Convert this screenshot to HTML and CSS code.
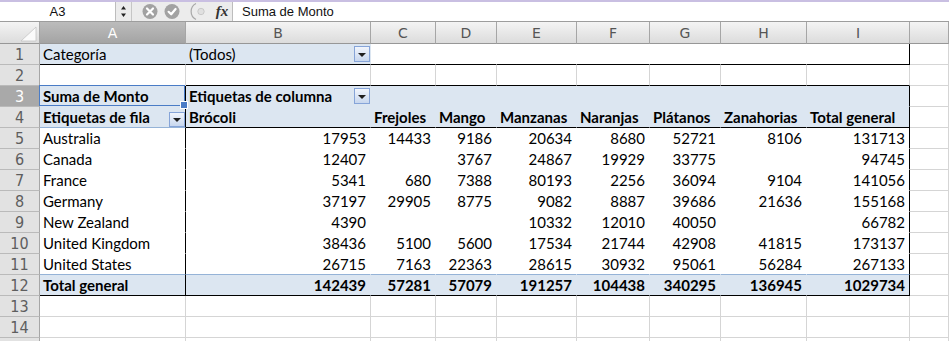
FILE: index.html
```html
<!DOCTYPE html>
<html lang="es">
<head>
<meta charset="utf-8">
<title>Tabla dinámica</title>
<link rel="stylesheet" href="styles.css">
</head>
<body>
<div class="formula-bar">
  <div class="name-box">A3</div>
  <div class="stepper">
    <svg width="7" height="13" viewBox="0 0 7 13"><path d="M3.5 1 L6 4.5 L1 4.5 Z" fill="#222"/><path d="M3.5 12 L6 8.5 L1 8.5 Z" fill="#222"/></svg>
  </div>
  <div class="tools">
    <svg class="tool-icons" width="80" height="19" viewBox="0 0 80 19">
      <circle cx="18" cy="9.5" r="7.5" fill="#a2a2a2"/>
      <path d="M15 6.5 L21 12.5 M21 6.5 L15 12.5" stroke="#fff" stroke-width="2.2" stroke-linecap="round"/>
      <circle cx="40" cy="9.5" r="7.5" fill="#a2a2a2"/>
      <path d="M36.6 9.8 L39.2 12.3 L43.6 7" stroke="#fff" stroke-width="2.2" fill="none" stroke-linecap="round" stroke-linejoin="round"/>
      <path d="M64 1.5 A 9 9 0 0 0 64 17.5" stroke="#a8a8a8" stroke-width="1.2" fill="none"/>
      <circle cx="69" cy="9.5" r="3.2" fill="#e0e0e0" stroke="#c2c2c2" stroke-width="0.8"/>
    </svg>
    <span class="fx">fx</span>
  </div>
  <div class="fb-input">Suma de Monto</div>
</div>

<div class="sheet">
  <div class="ch corner"><svg width="39" height="21" viewBox="0 0 39 21"><path d="M36 5 L36 19 L21 19 Z" fill="#fbfbfb" stroke="#c4c4c4" stroke-width="0.8"/></svg></div>
  <div class="ch sel">A</div>
  <div class="ch">B</div>
  <div class="ch">C</div>
  <div class="ch">D</div>
  <div class="ch">E</div>
  <div class="ch">F</div>
  <div class="ch">G</div>
  <div class="ch">H</div>
  <div class="ch">I</div>
  <div class="ch"></div>

  <!-- row 1 -->
  <div class="rh">1</div>
  <div class="c pf r1">Categoría</div>
  <div class="c pf r1 has-dd">(Todos)<span class="dd"></span></div>
  <div class="c r1"></div><div class="c r1"></div><div class="c r1"></div><div class="c r1"></div><div class="c r1"></div><div class="c r1"></div>
  <div class="c r1 edge"></div>
  <div class="c"></div>

  <!-- row 2 -->
  <div class="rh">2</div>
  <div class="c"></div>
  <div class="c top"></div><div class="c top"></div><div class="c top"></div><div class="c top"></div><div class="c top"></div><div class="c top"></div><div class="c top"></div><div class="c top"></div>
  <div class="c"></div>

  <!-- row 3 -->
  <div class="rh sel">3</div>
  <div class="c hd pl sel">Suma de Monto</div>
  <div class="c hd has-dd">Etiquetas de columna<span class="dd"></span></div>
  <div class="c hd"></div><div class="c hd"></div><div class="c hd"></div><div class="c hd"></div><div class="c hd"></div><div class="c hd"></div>
  <div class="c hd edge"></div>
  <div class="c"></div>

  <!-- row 4 -->
  <div class="rh">4</div>
  <div class="c hd pl lb has-dd">Etiquetas de fila<span class="dd dd-low"></span></div>
  <div class="c hd bk">Brócoli</div>
  <div class="c hd bk">Frejoles</div>
  <div class="c hd bk">Mango</div>
  <div class="c hd bk">Manzanas</div>
  <div class="c hd bk">Naranjas</div>
  <div class="c hd bk">Plátanos</div>
  <div class="c hd bk">Zanahorias</div>
  <div class="c hd bk edge">Total general</div>
  <div class="c"></div>

  <!-- row 5 -->
  <div class="rh">5</div>
  <div class="c body pl">Australia</div>
  <div class="c body num">17953</div><div class="c body num">14433</div><div class="c body num">9186</div><div class="c body num">20634</div><div class="c body num">8680</div><div class="c body num">52721</div><div class="c body num">8106</div>
  <div class="c body num edge">131713</div>
  <div class="c"></div>

  <!-- row 6 -->
  <div class="rh">6</div>
  <div class="c body pl">Canada</div>
  <div class="c body num">12407</div><div class="c body num"></div><div class="c body num">3767</div><div class="c body num">24867</div><div class="c body num">19929</div><div class="c body num">33775</div><div class="c body num"></div>
  <div class="c body num edge">94745</div>
  <div class="c"></div>

  <!-- row 7 -->
  <div class="rh">7</div>
  <div class="c body pl">France</div>
  <div class="c body num">5341</div><div class="c body num">680</div><div class="c body num">7388</div><div class="c body num">80193</div><div class="c body num">2256</div><div class="c body num">36094</div><div class="c body num">9104</div>
  <div class="c body num edge">141056</div>
  <div class="c"></div>

  <!-- row 8 -->
  <div class="rh">8</div>
  <div class="c body pl">Germany</div>
  <div class="c body num">37197</div><div class="c body num">29905</div><div class="c body num">8775</div><div class="c body num">9082</div><div class="c body num">8887</div><div class="c body num">39686</div><div class="c body num">21636</div>
  <div class="c body num edge">155168</div>
  <div class="c"></div>

  <!-- row 9 -->
  <div class="rh">9</div>
  <div class="c body pl">New Zealand</div>
  <div class="c body num">4390</div><div class="c body num"></div><div class="c body num"></div><div class="c body num">10332</div><div class="c body num">12010</div><div class="c body num">40050</div><div class="c body num"></div>
  <div class="c body num edge">66782</div>
  <div class="c"></div>

  <!-- row 10 -->
  <div class="rh">10</div>
  <div class="c body pl">United Kingdom</div>
  <div class="c body num">38436</div><div class="c body num">5100</div><div class="c body num">5600</div><div class="c body num">17534</div><div class="c body num">21744</div><div class="c body num">42908</div><div class="c body num">41815</div>
  <div class="c body num edge">173137</div>
  <div class="c"></div>

  <!-- row 11 -->
  <div class="rh">11</div>
  <div class="c body lb pl">United States</div>
  <div class="c body lb num">26715</div><div class="c body lb num">7163</div><div class="c body lb num">22363</div><div class="c body lb num">28615</div><div class="c body lb num">30932</div><div class="c body lb num">95061</div><div class="c body lb num">56284</div>
  <div class="c body lb num edge">267133</div>
  <div class="c"></div>

  <!-- row 12 -->
  <div class="rh">12</div>
  <div class="c hd bk pl">Total general</div>
  <div class="c hd bk num">142439</div><div class="c hd bk num">57281</div><div class="c hd bk num">57079</div><div class="c hd bk num">191257</div><div class="c hd bk num">104438</div><div class="c hd bk num">340295</div><div class="c hd bk num">136945</div>
  <div class="c hd bk num edge">1029734</div>
  <div class="c"></div>

  <!-- row 13 -->
  <div class="rh">13</div>
  <div class="c"></div><div class="c"></div><div class="c"></div><div class="c"></div><div class="c"></div><div class="c"></div><div class="c"></div><div class="c"></div><div class="c"></div><div class="c"></div>

  <!-- row 14 -->
  <div class="rh">14</div>
  <div class="c"></div><div class="c"></div><div class="c"></div><div class="c"></div><div class="c"></div><div class="c"></div><div class="c"></div><div class="c"></div><div class="c"></div><div class="c"></div>

  <!-- row 15 (only its top edge is visible) -->
  <div class="rh"></div>
  <div class="c"></div><div class="c"></div><div class="c"></div><div class="c"></div><div class="c"></div><div class="c"></div><div class="c"></div><div class="c"></div><div class="c"></div><div class="c"></div>
</div>
</body>
</html>
```

FILE: styles.css
```css
* { box-sizing: border-box; }

html, body {
  margin: 0;
  padding: 0;
  background: #fff;
  overflow: hidden;
}

body {
  font-family: Lato, Carlito, "Liberation Sans", sans-serif;
}

/* ---------- formula bar ---------- */
.formula-bar {
  display: flex;
  height: 22px;
  border-top: 2px solid #c9bfe2;
  border-bottom: 1px solid #9d9d9d;
  background: #ececec;
  font-family: "Liberation Sans", Arial, sans-serif;
  font-size: 13px;
  color: #111;
}

.name-box {
  width: 116px;
  background: #fff;
  border-right: 1px solid #bdbdbd;
  text-align: center;
  line-height: 19px;
}

.stepper {
  width: 16px;
  display: flex;
  align-items: center;
  justify-content: center;
  border-right: 1px solid #c6c6c6;
}

.tools {
  width: 100px;
  display: flex;
  align-items: center;
}

.tool-icons { display: block; }

.fx {
  width: 20px;
  text-align: center;
  font-family: "Liberation Serif", "Times New Roman", serif;
  font-style: italic;
  font-weight: bold;
  font-size: 15px;
  line-height: 19px;
  color: #333;
}

.fb-input {
  flex: 1;
  background: #fff;
  border-left: 1px solid #bdbdbd;
  padding-left: 9px;
  line-height: 19px;
}

/* ---------- sheet grid ---------- */
.sheet {
  display: grid;
  grid-template-columns: 40px 146px 185px 65px 61px 80px 73px 71px 86px 103px 1fr;
  grid-template-rows: 22px;
  grid-auto-rows: 21px;
}

.ch {
  display: flex;
  align-items: center;
  justify-content: center;
  background: linear-gradient(#f4f4f4, #dcdcdc);
  border-right: 1px solid #a6a6a6;
  border-bottom: 1px solid #979797;
  font-family: "DejaVu Sans", sans-serif;
  font-size: 14px;
  color: #555;
}

.ch.sel {
  background: linear-gradient(#bcbcbc, #a4a4a4);
  color: #fff;
}

.corner { justify-content: flex-start; }
.corner svg { display: block; }

.rh {
  display: flex;
  align-items: center;
  justify-content: center;
  background: #e2e2e2;
  border-right: 1px solid #a6a6a6;
  border-bottom: 1px solid #bababa;
  font-family: "DejaVu Sans Condensed", "DejaVu Sans", sans-serif;
  font-stretch: condensed;
  font-size: 16px;
  color: #5e5e5e;
}

.rh.sel {
  background: #a9a9a9;
  color: #fff;
}

.c {
  display: flex;
  align-items: center;
  padding: 0 4px 0 3px;
  white-space: nowrap;
  border-right: 1px solid #d5d5d5;
  border-bottom: 1px solid #d5d5d5;
  font-size: 15px;
  color: #000;
}

.num { justify-content: flex-end; }

/* pivot regions */
.pf {
  background: #dce6f1;
}

.hd {
  background: #dce6f1;
  font-weight: bold;
  border-right-color: transparent;
  border-bottom-color: transparent;
}

.body {
  border-right-color: transparent;
  border-bottom-color: transparent;
}

.r1 {
  border-right-color: transparent;
  border-bottom-color: #000;
}

.top { border-bottom-color: #000; }
.bk  { border-bottom-color: #000; }
.lb  { border-bottom-color: #95b3d7; }
.pl  { border-right-color: #000; }
.edge { border-right-color: #000; }

/* dropdown buttons */
.has-dd { padding-right: 0; }

.dd {
  width: 16px;
  height: 16px;
  margin-left: auto;
  flex: none;
  border: 1px solid #86a4d8;
  background: linear-gradient(#f1f5fc, #c8d7ee);
  display: flex;
  align-items: center;
  justify-content: center;
}

.dd::after {
  content: "";
  border-left: 4px solid transparent;
  border-right: 4px solid transparent;
  border-top: 4px solid #1e1e1e;
  margin-top: 1px;
}

.dd-low { align-self: flex-end; height: 15px; }

/* active cell selection */
.sel.c { position: relative; }

.sel.c::after {
  content: "";
  position: absolute;
  top: -1px;
  left: -1px;
  right: 0;
  bottom: 0;
  border: 1px solid #4a7cc6;
  pointer-events: none;
}

.sel.c::before {
  content: "";
  position: absolute;
  right: -3px;
  bottom: -3px;
  width: 6px;
  height: 6px;
  background: #4a7cc6;
  border: 1px solid #fff;
  z-index: 2;
}
```
